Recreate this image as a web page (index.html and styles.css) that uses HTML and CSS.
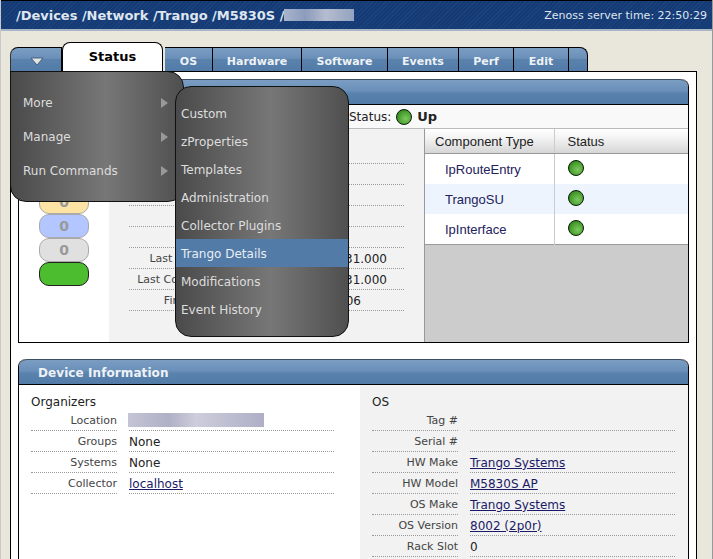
FILE: index.html
```html
<!DOCTYPE html>
<html lang="en">
<head>
    <meta charset="UTF-8">
    <title>Zenoss - M5830S</title>
    <link rel="stylesheet" href="styles.css">
</head>
<body>
    <div class="topbar">
        <div class="crumbs">/Devices /Network /Trango /M5830S /<span class="blur crumb-blur"></span></div>
        <div class="clock">Zenoss server time: 22:50:29</div>
    </div>

    <div class="tabs">
        <a class="tab tab-menu">
            <svg width="14" height="9" viewBox="0 0 14 9"><polygon points="1,1 13,1 7,8" fill="#e4e6e4" stroke="#45607f" stroke-width="1"/></svg>
        </a>
        <a class="tab tab-active">Status</a>
        <a class="tab tab-os">OS</a>
        <a class="tab tab-hw">Hardware</a>
        <a class="tab tab-sw">Software</a>
        <a class="tab tab-ev">Events</a>
        <a class="tab tab-pf">Perf</a>
        <a class="tab tab-ed">Edit</a>
        <a class="tab tab-end"></a>
    </div>

    <div class="main">
        <div class="panel">
            <div class="panel-head"></div>
            <div class="status-row">Status: <span class="dot"></span> <b>Up</b></div>
            <div class="overview">
                <div class="rainbow">
                    <div class="pill pill-red">0</div>
                    <div class="pill pill-orange">0</div>
                    <div class="pill pill-yellow">0</div>
                    <div class="pill pill-blue">0</div>
                    <div class="pill pill-gray">0</div>
                    <div class="pill pill-green"></div>
                </div>
                <div class="overview-info">
                    <div class="row"><span class="label">Device</span><span class="value">M5830S</span></div>
                    <div class="row"><span class="label">Uptime</span><span class="value"></span></div>
                    <div class="row"><span class="label">Ping</span><span class="value"></span></div>
                    <div class="row"><span class="label">SNMP</span><span class="value"></span></div>
                    <div class="row"><span class="label">Events</span><span class="value"></span></div>
                    <div class="row"><span class="label">Last Change</span><span class="value value-end">2008/03/06 15:31.000</span></div>
                    <div class="row"><span class="label">Last Collection</span><span class="value value-end">2008/03/06 15:31.000</span></div>
                    <div class="row"><span class="label">First Seen</span><span class="value value-end value-date">2008/03/06</span></div>
                </div>
                <div class="components">
                    <table>
                        <tr><th class="col-type">Component Type</th><th>Status</th></tr>
                        <tr><td class="col-type">IpRouteEntry</td><td><span class="dot"></span></td></tr>
                        <tr class="alt"><td class="col-type">TrangoSU</td><td><span class="dot"></span></td></tr>
                        <tr><td class="col-type">IpInterface</td><td><span class="dot"></span></td></tr>
                    </table>
                </div>
            </div>
        </div>

        <div class="panel panel-info">
            <div class="panel-head">Device Information</div>
            <div class="info">
                <div class="info-col">
                    <div class="info-title">Organizers</div>
                    <div class="row"><span class="label">Location</span><span class="value"><span class="blur location-blur"></span></span></div>
                    <div class="row"><span class="label">Groups</span><span class="value">None</span></div>
                    <div class="row"><span class="label">Systems</span><span class="value">None</span></div>
                    <div class="row"><span class="label">Collector</span><span class="value"><a href="#">localhost</a></span></div>
                </div>
                <div class="info-col info-col-os">
                    <div class="info-title">OS</div>
                    <div class="row"><span class="label">Tag #</span><span class="value"></span></div>
                    <div class="row"><span class="label">Serial #</span><span class="value"></span></div>
                    <div class="row"><span class="label">HW Make</span><span class="value"><a href="#">Trango Systems</a></span></div>
                    <div class="row"><span class="label">HW Model</span><span class="value"><a href="#">M5830S AP</a></span></div>
                    <div class="row"><span class="label">OS Make</span><span class="value"><a href="#">Trango Systems</a></span></div>
                    <div class="row"><span class="label">OS Version</span><span class="value"><a href="#">8002 (2p0r)</a></span></div>
                    <div class="row"><span class="label">Rack Slot</span><span class="value">0</span></div>
                </div>
            </div>
        </div>
    </div>

    <ul class="menu menu-main">
        <li>More<i class="arrow"></i></li>
        <li>Manage<i class="arrow"></i></li>
        <li>Run Commands<i class="arrow"></i></li>
    </ul>
    <ul class="menu menu-sub">
        <li>Custom</li>
        <li>zProperties</li>
        <li>Templates</li>
        <li>Administration</li>
        <li>Collector Plugins</li>
        <li class="selected">Trango Details</li>
        <li>Modifications</li>
        <li>Event History</li>
    </ul>
</body>
</html>
```

FILE: styles.css
```css
html, body {
    height: 559px;
    overflow: hidden;
}

body {
    box-sizing: border-box;
    margin: 0;
    font-family: "DejaVu Sans", sans-serif;
    font-size: 12px;
    color: #222;
    background-color: #e9e7dc;
    border-left: 1px solid #c8c8c8;
    border-right: 1px solid #999;
}

a {
    color: #1a1a66;
}

/* top bar */
.topbar {
    display: flex;
    justify-content: space-between;
    align-items: center;
    height: 28px;
    padding: 0 5px 0 15px;
    border-top: 1px solid #000;
    border-bottom: 2px solid #a9b6c6;
    background-color: #153a74;
    background-image: repeating-linear-gradient(135deg, #153a74 0, #153a74 2px, #1b4380 2px, #1b4380 3px);
}

.crumbs {
    display: flex;
    align-items: center;
    font-size: 13px;
    font-weight: bold;
    letter-spacing: -0.02px;
    color: #dfe6ef;
}

.clock {
    font-size: 11px;
    color: #dfe6ef;
}

.blur {
    display: inline-block;
    background: linear-gradient(90deg, #a8b4cc, #8c9cbc 30%, #b4bccf 60%, #93a3c0);
}

.crumb-blur {
    width: 70px;
    height: 12px;
}

/* tabs */
.tabs {
    display: flex;
    align-items: flex-end;
    height: 29px;
    margin: 11px 0 0 9px;
    width: 578px;
}

.tab {
    box-sizing: border-box;
    display: flex;
    justify-content: center;
    align-items: center;
    height: 24px;
    padding-top: 4px;
    font-size: 11px;
    font-weight: bold;
    color: #eef2f6;
    border: 1px solid #000;
    border-left: none;
    border-bottom: none;
    background: linear-gradient(#7b9dc2 0, #6a90b9 45%, #5a82ad 50%, #527ba8 100%);
}

.tab-menu {
    width: 52px;
    padding-left: 2px;
    border-left: 1px solid #333;
    border-top-left-radius: 8px;
}

.tab-active {
    width: 101px;
    height: 29px;
    padding: 0 0 1px;
    margin-right: 2px;
    font-size: 13px;
    color: #000;
    background: #fff;
    border-left: 1px solid #000;
    border-top-left-radius: 8px;
    border-top-right-radius: 8px;
}

.tab-os { width: 48px; }
.tab-hw { width: 89px; }
.tab-sw { width: 86px; }
.tab-ev { width: 71px; }
.tab-pf { width: 55px; }
.tab-ed { width: 55px; }

.tab-end {
    width: 19px;
    border-top-right-radius: 8px;
}

/* main box */
.main {
    box-sizing: border-box;
    width: 687px;
    margin-left: 9px;
    padding: 7px 7px 0;
    border: 1px solid #000;
    background-color: #fff;
}

.panel {
    border: 1px solid #000;
    border-top: none;
    border-top-left-radius: 8px;
    border-top-right-radius: 8px;
}

.panel-info {
    margin-top: 16px;
}

.panel-head {
    box-sizing: border-box;
    height: 26px;
    padding: 6px 19px 0;
    font-size: 12px;
    font-weight: bold;
    letter-spacing: 0.08px;
    color: #eef2f6;
    border-top: 1px solid #3d4f66;
    border-bottom: 1px solid #000;
    border-top-left-radius: 8px;
    border-top-right-radius: 8px;
    background: linear-gradient(#7b9dc2 0, #6a90b9 45%, #5a82ad 55%, #527ba8 100%);
}

.status-row {
    display: flex;
    align-items: center;
    gap: 5px;
    height: 23px;
    padding-left: 330px;
    font-size: 12px;
    background-color: #f9f9f9;
    border-bottom: 1px solid #bbb;
}

.status-row b {
    font-size: 13px;
}

.dot {
    box-sizing: border-box;
    display: inline-block;
    width: 16px;
    height: 16px;
    border: 1px solid #081c04;
    border-radius: 50%;
    background: radial-gradient(circle at 62% 62%, #7cc85f, #4a9f30 55%, #226f12);
}

.overview {
    display: flex;
    height: 213px;
    background-color: #f2f2f2;
}

.rainbow {
    box-sizing: border-box;
    width: 90px;
    padding: 13px 0 0 20px;
    background-color: #fff;
}

.pill {
    box-sizing: border-box;
    width: 50px;
    height: 24px;
    line-height: 22px;
    text-align: center;
    font-size: 14px;
    font-weight: bold;
    color: #999;
    border: 1px solid #aaa;
    border-radius: 10px;
}

.pill-red { background-color: #f9b0a0; }
.pill-orange { background-color: #fcc890; }
.pill-yellow { background-color: #fde3a4; }
.pill-blue { background-color: #b3c6ff; }
.pill-gray { background-color: #e0e0e0; }
.pill-green { background-color: #4cbd2f; border-color: #222; }

.overview-info {
    box-sizing: border-box;
    width: 315px;
    padding: 14px 20px 0;
}

.row {
    box-sizing: border-box;
    display: flex;
    gap: 12px;
    height: 21px;
    align-items: flex-end;
}

.label {
    box-sizing: border-box;
    flex: 0 0 86px;
    height: 21px;
    line-height: 21px;
    font-size: 11px;
    white-space: nowrap;
    color: #444;
    border-bottom: 1px dotted #999;
    display: flex;
    justify-content: flex-end;
}

.value {
    box-sizing: border-box;
    flex: 1;
    height: 21px;
    line-height: 23px;
    white-space: nowrap;
    border-bottom: 1px dotted #999;
}

.overview-info .label {
    flex-basis: 89px;
}

.value-end {
    text-align: right;
    padding-right: 17px;
}

.value-date {
    padding-right: 43px;
}

.components {
    flex: 1;
    border-left: 1px solid #999;
    background-color: #ccc;
}

table {
    width: 100%;
    table-layout: fixed;
    border-collapse: collapse;
    font-family: "Liberation Sans", sans-serif;
    font-size: 13px;
    background-color: #fff;
    border-bottom: 1px solid #999;
}

th {
    height: 24px;
    padding: 0 0 0 13px;
    text-align: left;
    font-weight: normal;
    color: #222;
    background: linear-gradient(#fff, #f2f2f2 40%, #d6d6d6);
    border-bottom: 1px solid #999;
}

td {
    height: 30px;
    padding: 0 0 0 13px;
    color: #22225c;
}

td .dot {
    display: block;
    margin-top: -3px;
}

.col-type {
    box-sizing: border-box;
    width: 129px;
    border-right: 1px solid #ccc;
}

th.col-type {
    padding-left: 10px;
}

td.col-type {
    padding-left: 20px;
}

.alt {
    background-color: #edf4fd;
}

/* device information */
.info {
    display: flex;
    height: 200px;
}

.info-col {
    box-sizing: border-box;
    width: 341px;
    padding: 9px 26px 0 12px;
}

.info-col-os {
    flex: 1;
    padding-right: 13px;
    background-color: #f2f2f2;
}

.info-title {
    height: 16px;
    line-height: 16px;
    font-size: 12px;
}

.location-blur {
    width: 136px;
    height: 14px;
    margin-left: -1px;
    vertical-align: -2px;
    background: linear-gradient(90deg, #c4c4d6, #b0b0c6 30%, #cdcddc 50%, #aeaec6 100%);
}

/* overlay menus */
.menu {
    position: absolute;
    box-sizing: border-box;
    width: 174px;
    margin: 0;
    list-style: none;
    color: #ddd;
    border: 1px solid #111;
    border-radius: 0 16px 16px 16px;
    background: linear-gradient(90deg, #4a4a4a, #777 55%, #4f4f4f);
}

.menu-main {
    left: 10px;
    top: 71px;
    height: 131px;
    padding: 14px 0 0;
}

.menu-main li {
    position: relative;
    height: 34px;
    line-height: 34px;
    padding-left: 12px;
}

.arrow {
    position: absolute;
    right: 15px;
    top: 12px;
    border-left: 7px solid #999;
    border-top: 5px solid transparent;
    border-bottom: 5px solid transparent;
}

.menu-sub {
    left: 175px;
    top: 86px;
    height: 251px;
    padding: 12px 0 0;
    border-radius: 16px;
}

.menu-sub li {
    height: 28px;
    line-height: 30px;
    padding-left: 5px;
}

.menu-sub .selected {
    color: #e8eef5;
    background-color: #527ba8;
}
```
